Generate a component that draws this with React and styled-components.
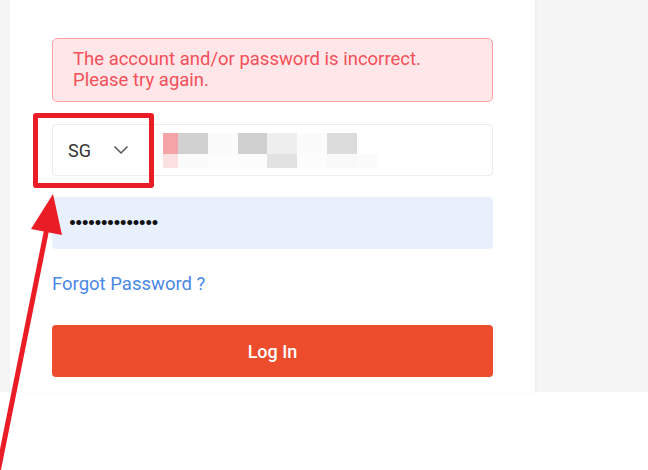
import React from "react";
import styled, { createGlobalStyle } from "styled-components";

const Global = createGlobalStyle`
  html, body { margin: 0; padding: 0; background: #ffffff; }
  body { font-family: Roboto, "Liberation Sans", Arial, sans-serif; }
  * { box-sizing: border-box; }
`;

const Page = styled.div`
  position: relative;
  width: 648px;
  height: 470px;
  overflow: hidden;
  background: #ffffff;
`;

const Stage = styled.div`
  display: flex;
  height: 392px;
  padding-left: 10px;
  background: #f5f5f5;
`;

const Card = styled.div`
  width: 525px;
  background: #ffffff;
  box-shadow: 1px 0 2px rgba(0, 0, 0, 0.04);
  padding: 38px 42px 0 42px;
  display: flex;
  flex-direction: column;
`;

const ErrorBox = styled.div`
  width: 441px;
  height: 64px;
  padding: 10px 20px;
  border: 1px solid #ffa1a6;
  border-radius: 5px;
  background: #ffe6e8;
  color: #f4505a;
  font-size: 18.5px;
  line-height: 21px;
`;

const Field = styled.div`
  width: 441px;
  height: 52px;
  margin-top: ${(p) => p.$mt}px;
  border-radius: 4px;
  display: flex;
  align-items: center;
  border: 1px solid ${(p) => (p.$filled ? "#e8f0fe" : "#ececec")};
  background: ${(p) => (p.$filled ? "#e8f0fe" : "#ffffff")};
  padding-left: 15px;
`;

const Country = styled.div`
  display: flex;
  align-items: center;
  width: 95px;
  font-size: 18px;
  color: #333333;
`;

const Chevron = styled.svg`
  margin-left: 22px;
  width: 16px;
  height: 10px;
`;

const Blur = styled.div`
  display: flex;
  flex-direction: column;
`;

const BlurRow = styled.div`
  display: flex;
  height: ${(p) => p.$h}px;
`;

const Cell = styled.div`
  width: ${(p) => p.$w}px;
  height: 100%;
  background: ${(p) => p.$c};
`;

const Dots = styled.span`
  font-size: 14px;
  letter-spacing: -2.6px;
  color: #111111;
  font-family: "DejaVu Sans", sans-serif;
  font-weight: bold;
  line-height: 1;
`;

const Forgot = styled.a`
  margin-top: 25px;
  font-size: 18.5px;
  line-height: 21px;
  color: #4a88e6;
  text-decoration: none;
`;

const LoginButton = styled.button`
  margin-top: 30px;
  width: 441px;
  height: 52px;
  border: none;
  border-radius: 4px;
  background: #ee4d2d;
  color: #ffffff;
  font-family: Roboto, "Liberation Sans", Arial, sans-serif;
  font-weight: 500;
  font-size: 18px;
`;

const Highlight = styled.div`
  position: absolute;
  left: 33px;
  top: 113px;
  width: 121px;
  height: 75px;
  border: 5px solid #ea1c26;
  border-radius: 3px;
  pointer-events: none;
`;

const ArrowLayer = styled.svg`
  position: absolute;
  left: 0;
  top: 0;
  width: 648px;
  height: 470px;
  pointer-events: none;
`;

const row1 = [
  [15, "#f4a3a7"],
  [30, "#d1d1d1"],
  [30, "#fbfbfb"],
  [29, "#d0d0d0"],
  [30, "#eeeeee"],
  [30, "#fbfbfb"],
  [30, "#dcdcdc"],
];
const row2 = [
  [15, "#fbe0e2"],
  [30, "#fbfbfb"],
  [30, "#fdfdfd"],
  [29, "#fcfcfc"],
  [30, "#e2e2e2"],
  [30, "#fcfcfc"],
  [30, "#f9f9f9"],
  [21, "#fbfbfb"],
];

export default function App() {
  return (
    <Page>
      <Global />
      <Stage>
        <Card>
          <ErrorBox>
            The account and/or password is incorrect.
            <br />
            Please try again.
          </ErrorBox>
          <Field $mt={22}>
            <Country>
              SG
              <Chevron viewBox="0 0 16 10">
                <path d="M1.5 1.5 L8 8 L14.5 1.5" fill="none" stroke="#555" strokeWidth="1.5" />
              </Chevron>
            </Country>
            <Blur>
              <BlurRow $h={21}>
                {row1.map(([w, c], i) => (
                  <Cell key={i} $w={w} $c={c} />
                ))}
              </BlurRow>
              <BlurRow $h={14}>
                {row2.map(([w, c], i) => (
                  <Cell key={i} $w={w} $c={c} />
                ))}
              </BlurRow>
            </Blur>
          </Field>
          <Field $mt={21} $filled>
            <Dots>••••••••••••••</Dots>
          </Field>
          <Forgot href="#">Forgot Password ?</Forgot>
          <LoginButton>Log In</LoginButton>
        </Card>
      </Stage>
      <Highlight />
      <ArrowLayer viewBox="0 0 648 470">
        <line x1="47" y1="228" x2="-2" y2="472" stroke="#ea1c26" strokeWidth="5" />
        <polygon points="53,194 31,229 62,235" fill="#ea1c26" />
      </ArrowLayer>
    </Page>
  );
}
